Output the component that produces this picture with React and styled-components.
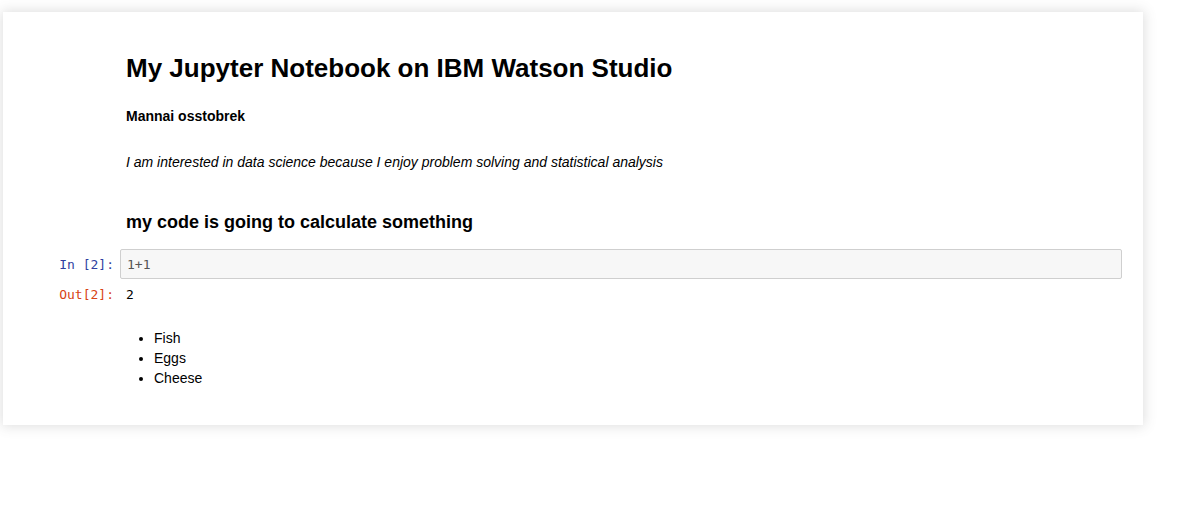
import styled, { createGlobalStyle } from "styled-components";

const Global = createGlobalStyle`
  body {
    margin: 0;
    background: #fff;
    font-family: "Liberation Sans", Arial, sans-serif;
    color: #000;
  }
`;

const Page = styled.div`
  padding: 12px 0 0 3px;
  height: 514px;
  box-sizing: border-box;
`;

const Notebook = styled.div`
  width: 1140px;
  padding: 15px 0 37px;
  background: #fff;
  box-shadow: 0 0 12px 1px rgba(87, 87, 87, 0.2);
`;

const Cell = styled.div`
  display: flex;
  align-items: ${(p) => (p.top ? "flex-start" : "center")};
  padding: 0 21px 0 20px;
  margin-top: ${(p) => p.gap || 0}px;
`;

const Prompt = styled.div`
  width: 97px;
  flex: none;
  box-sizing: border-box;
  padding-right: 6px;
  text-align: right;
  font-family: "DejaVu Sans Mono", "Liberation Mono", monospace;
  font-size: 13px;
  line-height: 17px;
  color: ${(p) => p.color};
`;

const Md = styled.div`
  flex: 1;
  padding-left: 6px;
`;

const Title = styled.h1`
  margin: 0;
  font-size: 26px;
  line-height: 32px;
  font-weight: 700;
`;

const Para = styled.p`
  margin: ${(p) => p.mt || 0}px 0 0;
  font-size: 14px;
  line-height: 20px;
  font-weight: ${(p) => (p.bold ? 700 : 400)};
  font-style: ${(p) => (p.italic ? "italic" : "normal")};
`;

const Sub = styled.h3`
  margin: 0;
  font-size: 18px;
  line-height: 24px;
  font-weight: 700;
`;

const InputArea = styled.div`
  flex: 1;
  height: 30px;
  box-sizing: border-box;
  background: #f7f7f7;
  border: 1px solid #cfcfcf;
  border-radius: 2px;
  padding: 0 6px;
  display: flex;
  align-items: center;
  font-family: "DejaVu Sans Mono", "Liberation Mono", monospace;
  font-size: 13px;
  color: #555;
`;

const Output = styled.div`
  flex: 1;
  padding-left: 6px;
  font-family: "DejaVu Sans Mono", "Liberation Mono", monospace;
  font-size: 13px;
  line-height: 17px;
`;

const List = styled.ul`
  margin: 0;
  padding-left: 28px;
  font-size: 14px;
  line-height: 20px;
`;

export default function App() {
  return (
    <Page>
      <Global />
      <Notebook>
        <Cell top gap={25}>
          <Prompt />
          <Md>
            <Title>My Jupyter Notebook on IBM Watson Studio</Title>
            <Para bold mt={22}>Mannai osstobrek</Para>
            <Para italic mt={26}>
              I am interested in data science because I enjoy problem solving and statistical analysis
            </Para>
          </Md>
        </Cell>
        <Cell top gap={38}>
          <Prompt />
          <Md>
            <Sub>my code is going to calculate something</Sub>
          </Md>
        </Cell>
        <Cell gap={15}>
          <Prompt color="#303F9F">In&nbsp;[2]:</Prompt>
          <InputArea>1+1</InputArea>
        </Cell>
        <Cell gap={7}>
          <Prompt color="#D84315">Out[2]:</Prompt>
          <Output>2</Output>
        </Cell>
        <Cell top gap={25}>
          <Prompt />
          <Md>
            <List>
              <li>Fish</li>
              <li>Eggs</li>
              <li>Cheese</li>
            </List>
          </Md>
        </Cell>
      </Notebook>
    </Page>
  );
}
